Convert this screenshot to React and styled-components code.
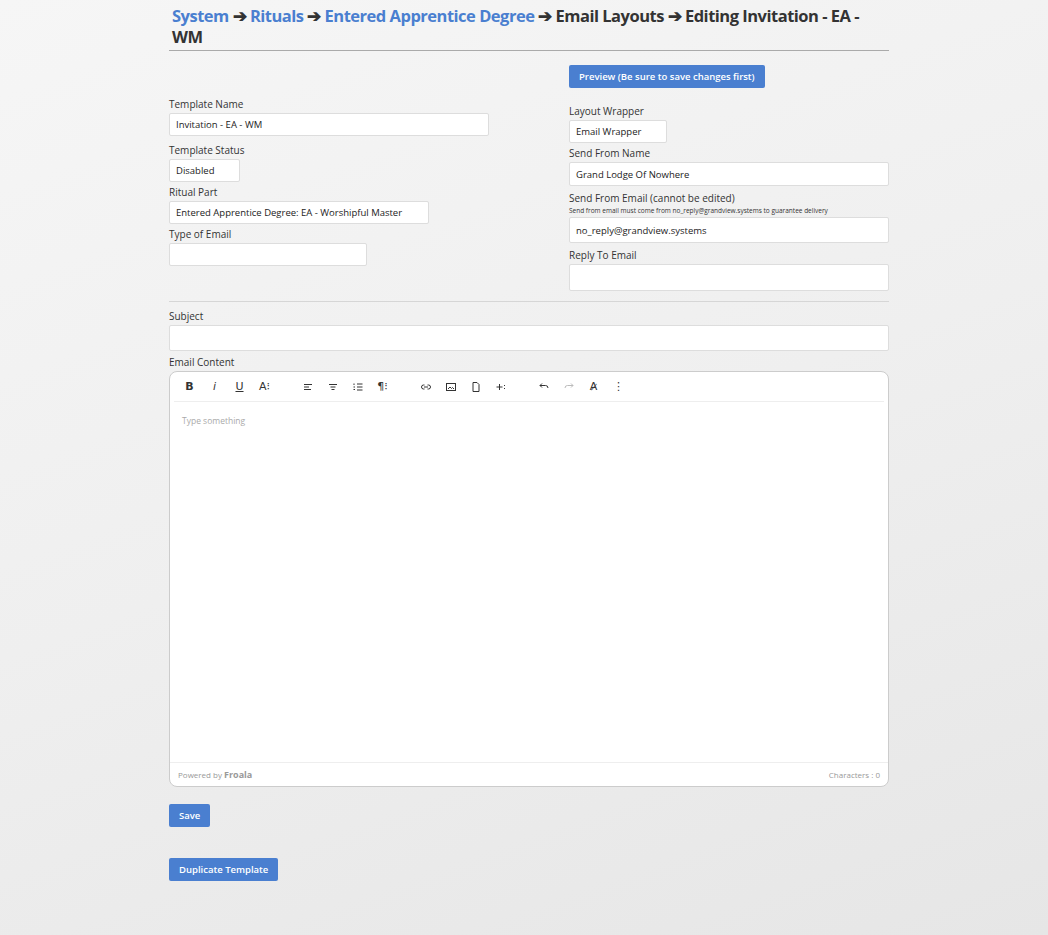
import React from "react";
import styled, { createGlobalStyle } from "styled-components";

const G = createGlobalStyle`
  html,body{margin:0;min-height:935px;}
  body{background:linear-gradient(160deg,#f6f6f6 0%,#efefef 50%,#e6e6e6 100%);font-family:"Open Sans",sans-serif;color:#333;}
`;
const Page = styled.div`width:720px;margin-left:169px;padding-top:5px;`;
const Title = styled.h1`margin:0 0 0 3px;font-size:16.5px;font-weight:700;line-height:21px;color:#333;letter-spacing:-0.5px;`;
const Crumb = styled.span`color:${p => p.$link ? "#4a7fd0" : "#333"};`;
const Hr = styled.hr`border:0;border-top:1px solid ${p => p.$dark ? "#aaa" : "#d6d6d6"};margin:${p => p.$m};`;
const Cols = styled.div`display:grid;grid-template-columns:400px 320px;`;
const Col = styled.div`display:flex;flex-direction:column;padding-top:${p => p.$pt}px;`;
const Label = styled.label`font-size:10px;line-height:12px;margin-bottom:${p => p.$mb ?? 3}px;display:block;`;
const Note = styled.div`font-size:6.5px;line-height:9px;margin:2px 0 2px;`;
const Input = styled.div`box-sizing:border-box;background:#fff;border:1px solid #ddd;border-radius:2px;height:${p => p.$h || 23}px;width:${p => p.$w ? p.$w + "px" : "100%"};font-size:9.5px;padding:0 6px;display:flex;align-items:center;margin-bottom:${p => p.$mb ?? 4}px;color:#222;`;
const Btn = styled.button`background:#4a7fd0;color:#fff;border:0;border-radius:2px;font-family:"Open Sans",sans-serif;font-weight:600;font-size:9.5px;height:23px;padding:0 10px;align-self:flex-start;`;
const Editor = styled.div`background:#fff;border:1px solid #ccc;border-radius:8px;height:414px;display:flex;flex-direction:column;`;
const Toolbar = styled.div`height:29px;display:flex;align-items:center;padding-left:3px;margin:0 4px;border-bottom:1px solid #eee;`;
const Tool = styled.span`width:25px;display:flex;justify-content:center;align-items:center;font-size:11px;color:${p => p.$dis ? "#bbb" : "#333"};margin-left:${p => p.$gap ? 18 : 0}px;font-family:"DejaVu Sans",sans-serif;`;
const Body = styled.div`flex:1;padding:13px 12px;font-size:8.5px;color:#aaa;`;
const Foot = styled.div`height:23px;border-top:1px solid #eee;display:flex;justify-content:space-between;align-items:center;padding:0 8px;font-size:8px;color:#999;`;
const Ic = ({ d, dis }) => (
  <svg width="12" height="12" viewBox="0 0 24 24" fill="none" stroke={dis ? "#bbb" : "#333"} strokeWidth="2">{d}</svg>
);

export default function App() {
  return (
    <Page>
      <G />
      <Title>
        <Crumb $link>System</Crumb> ➔ <Crumb $link>Rituals</Crumb> ➔ <Crumb $link>Entered Apprentice Degree</Crumb> ➔ Email Layouts ➔ Editing Invitation - EA - WM
      </Title>
      <Hr $dark $m="3px 0 14px" />
      <Cols>
        <Col $pt={33}>
          <Label>Template Name</Label>
          <Input $w={320} $mb={8}>Invitation - EA - WM</Input>
          <Label>Template Status</Label>
          <Input $w={71}>Disabled</Input>
          <Label>Ritual Part</Label>
          <Input $w={260}>Entered Apprentice Degree: EA - Worshipful Master</Input>
          <Label>Type of Email</Label>
          <Input $w={198} $mb={0} />
        </Col>
        <Col $pt={0}>
          <Btn>Preview (Be sure to save changes first)</Btn>
          <div style={{ height: 17 }} />
          <Label>Layout Wrapper</Label>
          <Input $w={98}>Email Wrapper</Input>
          <Label>Send From Name</Label>
          <Input $h={24} $mb={6}>Grand Lodge Of Nowhere</Input>
          <Label $mb={0}>Send From Email (cannot be edited)</Label>
          <Note>Send from email must come from no_reply@grandview.systems to guarantee delivery</Note>
          <Input $h={26} $mb={6}>no_reply@grandview.systems</Input>
          <Label>Reply To Email</Label>
          <Input $h={27} $mb={0} />
        </Col>
      </Cols>
      <Hr $m="10px 0 8px" />
      <Label>Subject</Label>
      <Input $h={26} $mb={5} />
      <Label>Email Content</Label>
      <Editor>
        <Toolbar>
          <Tool><b>B</b></Tool>
          <Tool><i>i</i></Tool>
          <Tool><u>U</u></Tool>
          <Tool>A⁝</Tool>
          <Tool $gap><Ic d={<path d="M4 7h16M4 12h10M4 17h14" />} /></Tool>
          <Tool><Ic d={<path d="M4 7h16M7 12h10M9 17h6" />} /></Tool>
          <Tool><Ic d={<path d="M10 6h11M10 12h11M10 18h11M4 5v3M3 12h3M3 17h3" />} /></Tool>
          <Tool>¶⁝</Tool>
          <Tool $gap><Ic d={<path d="M9 8H7a4 4 0 000 8h2M15 8h2a4 4 0 010 8h-2M8 12h8" />} /></Tool>
          <Tool><Ic d={<><rect x="3" y="5" width="18" height="14" /><path d="M6 16l4-4 3 3 2-2 3 3" /></>} /></Tool>
          <Tool><Ic d={<path d="M6 3h8l4 4v14H6z" />} /></Tool>
          <Tool><Ic d={<path d="M3 12h12M9 6v12M19 8v2M19 14v2" />} /></Tool>
          <Tool $gap><Ic d={<path d="M4 9h11a5 5 0 015 5M4 9l4-4M4 9l4 4" />} /></Tool>
          <Tool><Ic dis d={<path d="M20 9H9a5 5 0 00-5 5M20 9l-4-4M20 9l-4 4" />} /></Tool>
          <Tool>A̷</Tool>
          <Tool>⋮</Tool>
        </Toolbar>
        <Body>Type something</Body>
        <Foot><span>Powered by <b style={{ fontSize: 9, color: "#999" }}>Froala</b></span><span>Characters : 0</span></Foot>
      </Editor>
      <div style={{ height: 15 }} />
      <Btn>Save</Btn>
      <div style={{ height: 29 }} />
      <Btn>Duplicate Template</Btn>
    </Page>
  );
}
